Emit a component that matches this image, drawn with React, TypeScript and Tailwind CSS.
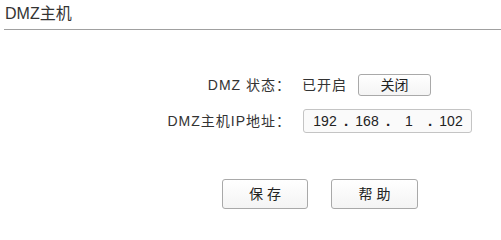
import React from "react";

export default function App() {
  const octets = ["192", "168", "1", "102"];
  return (
    <div
      className="w-[501px] h-[222px] bg-white text-[#333333] overflow-hidden"
      style={{ fontFamily: '"Liberation Sans", Arial, "Noto Sans CJK SC", sans-serif' }}
    >
      <div className="ml-[4px] h-[30px] border-b border-[#a0a0a0] pl-[1px] pt-[4px]">
        <div className="text-[16px] leading-[20px]">DMZ主机</div>
      </div>

      <div className="mt-[44px] flex items-center h-[22px] text-[14px]">
        <div className="w-[291px] text-right tracking-[1px]">DMZ 状态：</div>
        <div className="ml-[11px] tracking-[1px]">已开启</div>
        <button className="ml-[11px] w-[73px] h-[22px] border border-[#a9a9a9] rounded-[3px] bg-gradient-to-b from-white to-[#f4f4f4] text-[14px] leading-[20px] text-[#222222]">
          关闭
        </button>
      </div>

      <div className="mt-[13px] flex items-center h-[24px] text-[14px]">
        <div className="w-[291px] text-right tracking-[1px]">DMZ主机IP地址：</div>
        <div className="ml-[12px] w-[169px] h-[24px] border border-[#c4c4c4] rounded-[3px] bg-[#fafafa] flex items-center pl-[5px] text-[#222222]">
          {octets.map((o, i) => (
            <React.Fragment key={i}>
              {i > 0 && <span className="w-[10px] text-center font-bold text-[15px] leading-[20px]">.</span>}
              <span className="w-[32px] text-center leading-[20px]">{o}</span>
            </React.Fragment>
          ))}
        </div>
      </div>

      <div className="mt-[46px] ml-[222px] flex gap-[23px]">
        <button className="w-[86px] h-[30px] border border-[#a9a9a9] rounded-[3px] bg-gradient-to-b from-white to-[#f4f4f4] text-[14px] text-[#222222]">
          保 存
        </button>
        <button className="w-[87px] h-[30px] border border-[#a9a9a9] rounded-[3px] bg-gradient-to-b from-white to-[#f4f4f4] text-[14px] text-[#222222]">
          帮 助
        </button>
      </div>
    </div>
  );
}
